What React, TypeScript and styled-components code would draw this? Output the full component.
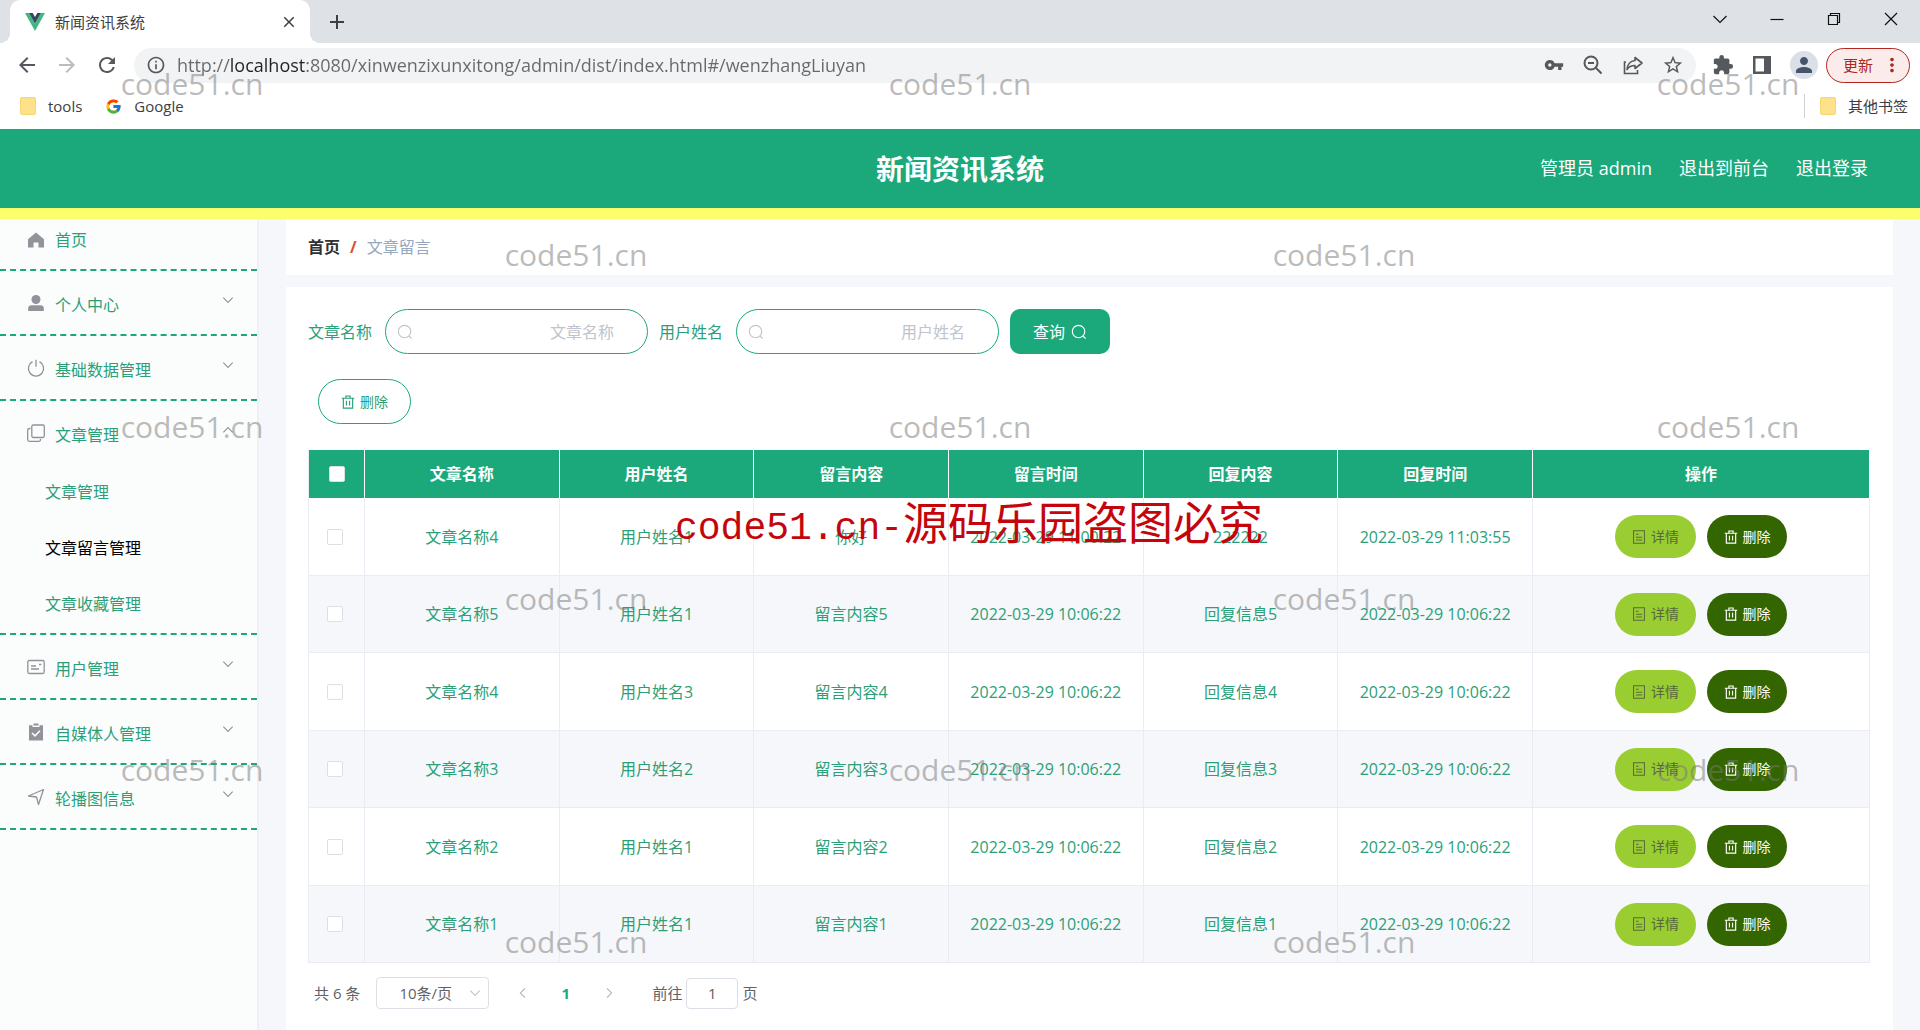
import React from "react";
import styled, { createGlobalStyle, css } from "styled-components";
import {
  MdAdd,
  MdArrowBack,
  MdArrowForward,
  MdClose,
  MdExtension,
  MdInfoOutline,
  MdMoreVert,
  MdPerson,
  MdRefresh,
  MdStarBorder,
  MdVpnKey,
} from "react-icons/md";
import { FcGoogle } from "react-icons/fc";

const green = "#1ba97b";
const textGreen = "#2c9f78";
const pageGrey = "#f5f7fa";
const line = "#e9ecf2";

const GlobalStyle = createGlobalStyle`
  *, *::before, *::after { box-sizing: border-box; }
  body {
    margin: 0;
    background: #fff;
    font-family: "Open Sans", "Noto Sans CJK SC", sans-serif;
    font-size: 16px;
    line-height: 24px;
    color: ${textGreen};
  }
  button, input, select { font: inherit; color: inherit; margin: 0; }
  button { padding: 0; border: 0; background: none; cursor: pointer; }
  a { color: inherit; text-decoration: none; }
  svg { display: block; flex: none; }
`;

const Screen = styled.div`
  position: relative;
  display: flex;
  flex-direction: column;
  min-height: 100vh;
  overflow: hidden;
`;

/* ---------- browser frame ---------- */

const TabStrip = styled.div`
  display: flex;
  align-items: center;
  height: 43px;
  padding-left: 10px;
  background: #dee1e6;
  color: #3c4043;
`;

const Tab = styled.div`
  position: relative;
  display: flex;
  align-items: center;
  gap: 10px;
  width: 300px;
  height: 43px;
  padding: 0 12px 0 15px;
  border-radius: 10px 10px 0 0;
  background: #fff;
  font-size: 15px;

  &::before,
  &::after {
    content: "";
    position: absolute;
    bottom: 0;
    width: 10px;
    height: 10px;
  }
  &::before {
    left: -10px;
    background: radial-gradient(circle at 0 0, transparent 10px, #fff 10px);
  }
  &::after {
    right: -10px;
    background: radial-gradient(circle at 100% 0, transparent 10px, #fff 10px);
  }
`;

const TabTitle = styled.span`
  flex: 1;
`;

const NewTab = styled.button`
  margin-left: 15px;
`;

const WindowControls = styled.div`
  display: flex;
  gap: 37px;
  margin-left: auto;
  padding: 0 19px 6px 0;
  color: #111;
`;

const Toolbar = styled.div`
  display: flex;
  align-items: center;
  height: 46px;
  padding: 0 10px 2px 15px;
  color: #55595e;
`;

const NavButtons = styled.div`
  display: flex;
  gap: 16px;
  margin-right: 15px;
`;

const IconButton = styled.button<{ $dim?: boolean }>`
  color: ${(p) => (p.$dim ? "#babcbe" : "inherit")};
`;

const AddressBar = styled.div`
  display: flex;
  flex: 1;
  align-items: center;
  gap: 11px;
  height: 35px;
  padding: 0 12px;
  border-radius: 18px;
  background: #f1f3f4;
`;

const AddressInput = styled.input`
  flex: 1;
  min-width: 0;
  height: 30px;
  padding: 0;
  border: 0;
  outline: 0;
  font-size: 18px;
  color: transparent;
  background: linear-gradient(to right, #65696e 53px, #202124 53px, #202124 129px, #65696e 129px);
  background-clip: text;
  -webkit-background-clip: text;
`;

const AddressActions = styled.div`
  display: flex;
  gap: 18px;
`;

const BrowserActions = styled.div`
  display: flex;
  align-items: center;
  gap: 19px;
  padding: 0 8px 0 16px;
`;

const Avatar = styled.button`
  display: grid;
  place-items: center;
  width: 28px;
  height: 28px;
  border-radius: 50%;
  background: #dadfe8;
  color: #46546a;
`;

const UpdateButton = styled.button`
  display: flex;
  align-items: center;
  justify-content: space-between;
  width: 84px;
  height: 35px;
  padding: 0 6px 0 16px;
  border: 1px solid #b3261e;
  border-radius: 18px;
  background: #fbeceb;
  font-size: 15px;
  color: #a82a22;
`;

const Bookmarks = styled.div`
  display: flex;
  align-items: center;
  height: 40px;
  padding: 0 12px 6px 20px;
  font-size: 15px;
  color: #3c4043;
`;

const Bookmark = styled.a<{ $last?: boolean }>`
  display: flex;
  align-items: center;
  gap: 12px;
  margin-right: 23px;
  ${(p) =>
    p.$last &&
    css`
      margin: 0 0 0 auto;
      padding-left: 15px;
      border-left: 1px solid #cfd2d6;
    `}
`;

const Folder = styled.i`
  width: 16px;
  height: 18px;
  border: 1px solid #f3d774;
  border-radius: 2px;
  background: #fde28b;
`;

/* ---------- application ---------- */

const AppHeader = styled.header`
  display: grid;
  grid-template-columns: 1fr auto 1fr;
  align-items: center;
  height: 90px;
  padding: 0 52px;
  border-bottom: 11px solid #fbff6b;
  background: ${green};
  color: #fff;
`;

const Title = styled.h1`
  grid-column: 2;
  margin: 0;
  font-size: 28px;
  line-height: 40px;
  font-weight: 700;
`;

const HeaderLinks = styled.div`
  display: flex;
  justify-content: flex-end;
  gap: 27px;
  padding-bottom: 2px;
  font-size: 18px;
`;

const Body = styled.div`
  display: flex;
  flex: 1;
`;

const Sidebar = styled.nav`
  flex: none;
  width: 259px;
  border-right: 2px solid #eef0f4;
  background: #fbfcfc;
`;

const MenuItem = styled.button<{ $first?: boolean; $open?: boolean }>`
  display: flex;
  align-items: center;
  gap: 10px;
  width: 100%;
  height: ${(p) => (p.$first ? 52 : p.$open ? 63 : 65)}px;
  padding: 0 23px 0 27px;
  padding-bottom: ${(p) => (p.$first ? 8 : 0)}px;
  border-bottom: ${(p) => (p.$open ? "0" : `2px dashed ${green}`)};
  text-align: left;

  & > svg {
    color: #909399;
  }
`;

const MenuLabel = styled.span<{ $low?: boolean }>`
  flex: 1;
  padding-top: ${(p) => (p.$low ? 4 : 0)}px;
`;

const Arrow = styled.span<{ $up?: boolean }>`
  padding-bottom: 6px;
  color: #909399;
  ${(p) =>
    p.$up &&
    css`
      padding: 6px 0 0;
      transform: rotate(180deg);
    `}
`;

const SubMenu = styled.div`
  padding-bottom: 1px;
  border-bottom: 2px dashed ${green};
`;

const SubItem = styled.button<{ $active?: boolean }>`
  display: block;
  width: 100%;
  height: 56px;
  padding-left: 45px;
  text-align: left;
  color: ${(p) => (p.$active ? "#000" : textGreen)};
`;

const Main = styled.main`
  display: flex;
  flex: 1;
  flex-direction: column;
  gap: 12px;
  min-width: 0;
  padding: 0 27px;
  background: ${pageGrey};
`;

const Crumbs = styled.div`
  display: flex;
  align-items: center;
  gap: 10px;
  height: 56px;
  padding: 0 22px;
  background: #fff;
  color: #97a8be;
`;

const CrumbHome = styled.a`
  font-weight: 700;
  color: #303133;
`;

const CrumbSlash = styled.span`
  font-weight: 700;
  color: #d9502e;
`;

const Card = styled.section`
  flex: 1;
  padding: 22px 23px 20px 22px;
  background: #fff;
`;

const SearchForm = styled.form`
  display: flex;
  align-items: center;
  gap: 11px;
`;

const Field = styled.label`
  display: flex;
  align-items: center;
  gap: 13px;
`;

const InputShell = styled.span`
  display: flex;
  align-items: center;
  width: 263px;
  height: 45px;
  padding: 0 33px 0 11px;
  border: 1px solid ${green};
  border-radius: 23px;
  color: #c0c4cc;
`;

const SearchInput = styled.input`
  flex: 1;
  min-width: 0;
  padding: 0;
  border: 0;
  outline: 0;
  background: transparent;
  text-align: right;
  color: ${textGreen};
  &::placeholder {
    color: #c0c4cc;
    opacity: 1;
  }
`;

const QueryButton = styled.button`
  display: flex;
  align-items: center;
  justify-content: center;
  gap: 6px;
  width: 100px;
  height: 45px;
  border-radius: 10px;
  background: ${green};
  color: #fff;
`;

const kinds = {
  outline: css`
    width: 93px;
    height: 45px;
    border: 1px solid ${green};
    color: ${textGreen};
  `,
  detail: css`
    width: 81px;
    height: 43px;
    background: #9acd32;
    color: #56693c;
  `,
  remove: css`
    width: 80px;
    height: 43px;
    background: #336600;
    color: #fff;
  `,
};

const PillButton = styled.button<{ $kind: keyof typeof kinds }>`
  display: flex;
  align-items: center;
  justify-content: center;
  gap: 5px;
  border-radius: 23px;
  font-size: 14px;
  ${(p) => kinds[p.$kind]}
`;

const BatchBar = styled.div`
  padding: 25px 10px 26px;
`;

const Table = styled.table`
  width: 100%;
  table-layout: fixed;
  border-collapse: separate;
  border-spacing: 0;
  border-left: 1px solid ${line};
  text-align: center;
`;

const CheckCol = styled.col`
  width: 56px;
`;

const ActionCol = styled.col`
  width: 337px;
`;

const HeadCell = styled.th`
  height: 48px;
  padding: 0;
  border-right: 1px solid #fff;
  background: ${green};
  color: #fff;
  font-weight: 700;
`;

const Row = styled.tr`
  height: 78px;
  &:nth-child(even) {
    height: 77px;
    background: ${pageGrey};
  }
`;

const Cell = styled.td`
  padding: 0;
  border-right: 1px solid ${line};
  border-bottom: 1px solid ${line};
  &:first-child {
    padding-right: 4px;
  }
`;

const CheckBox = styled.input`
  display: block;
  width: 16px;
  height: 16px;
  margin: 0 auto;
  appearance: none;
  border: 1px solid #dcdfe6;
  border-radius: 2px;
  background: #fff;
`;

const Actions = styled.div`
  display: flex;
  justify-content: center;
  gap: 11px;
`;

const Pager = styled.div`
  display: flex;
  align-items: center;
  padding: 14px 6px 0;
  font-size: 15px;
  color: #606266;
`;

const SizePicker = styled.span`
  display: grid;
  align-items: center;
  margin: 0 12px 0 16px;
  & > * {
    grid-area: 1 / 1;
  }
  & > svg {
    justify-self: end;
    margin-right: 8px;
    color: #c0c4cc;
    pointer-events: none;
  }
`;

const SizeSelect = styled.select`
  width: 113px;
  height: 32px;
  padding: 0 0 0 22px;
  appearance: none;
  border: 1px solid #dcdfe6;
  border-radius: 4px;
  background: #fff;
`;

const PageButton = styled.button<{ $current?: boolean }>`
  display: grid;
  place-items: center;
  width: 43px;
  height: 32px;
  font-weight: ${(p) => (p.$current ? 700 : 400)};
  color: ${(p) => (p.$current ? green : "#b4b8c0")};
`;

const Jump = styled.label`
  display: flex;
  align-items: center;
  gap: 4px;
  margin-left: 22px;
`;

const JumpInput = styled.input`
  width: 52px;
  height: 31px;
  padding: 0;
  border: 1px solid #dcdfe6;
  border-radius: 4px;
  text-align: center;
`;

/* ---------- watermark layer ---------- */

const MarkGrid = styled.div`
  position: absolute;
  inset: 0;
  display: grid;
  grid-template-columns: repeat(5, 1fr);
  grid-template-rows: repeat(6, 1fr);
  place-items: center;
  pointer-events: none;
  font-size: 30px;
  line-height: 40px;
  color: rgba(120, 120, 120, 0.5);
`;

const Mark = styled.span`
  padding-bottom: 4px;
`;

const Notice = styled.div`
  position: absolute;
  left: 0;
  right: 0;
  top: 499px;
  padding-left: 18px;
  display: flex;
  align-items: center;
  justify-content: center;
  pointer-events: none;
  font-family: "Liberation Mono", "Noto Sans CJK SC", monospace;
  font-size: 38px;
  line-height: 60px;
  color: #c4060c;
`;

const NoticeHan = styled.span`
  font-size: 45px;
`;

/* ---------- icons ---------- */

type IconProps = { size?: number; children: React.ReactNode; sw?: number };
const Line = ({ size = 18, sw = 1.3, children }: IconProps) => (
  <svg width={size} height={size} viewBox="0 0 18 18" fill="none" stroke="currentColor" strokeWidth={sw} aria-hidden="true">
    {children}
  </svg>
);

const SearchIcon = () => (
  <Line size={16}>
    <circle cx="8.5" cy="8.5" r="7" />
    <path d="M13.5 13.5 16.5 16.5" />
  </Line>
);
const TrashIcon = () => (
  <Line size={14} sw={1.5}>
    <path d="M1 4.2h16M3 4.2v12.6h12V4.2M6.3 4V1.3h5.4V4M7 7.5v6M11 7.5v6" />
  </Line>
);
const DetailIcon = () => (
  <Line size={14} sw={1.3}>
    <path d="M2 1h14v16H2zM5 5.5h3.5M5 9.3h8M5 13h8" />
  </Line>
);
const Chevron = ({ size = 12, d = "M2 5.5 9 12.5 16 5.5" }: { size?: number; d?: string }) => (
  <Line size={size} sw={1.7}>
    <path d={d} />
  </Line>
);

const menuIcons: Record<string, React.ReactNode> = {
  home: (
    <Line>
      <path d="M9 1.5 17 8.2V16.5H11.5V11.5H6.5V16.5H1V8.2Z" fill="currentColor" stroke="none" />
    </Line>
  ),
  user: (
    <Line>
      <circle cx="9" cy="5.5" r="4.5" fill="currentColor" stroke="none" />
      <path d="M1.2 17v-2.500a3.300 3.300 0 0 1 3.300-3.300h9a3.300 3.300 0 0 1 3.300 3.300V17Z" fill="currentColor" stroke="none" />
    </Line>
  ),
  power: (
    <Line>
      <path d="M9 .8v7M5.5 2.7a7.6 7.6 0 1 0 7 0" />
    </Line>
  ),
  copy: (
    <Line>
      <rect x="4.8" y="1" width="12.5" height="12.5" rx="1.5" />
      <path d="M3.5 4.5H2.2A1.5 1.5 0 0 0 .7 6v9.8a1.5 1.5 0 0 0 1.5 1.5H12a1.5 1.5 0 0 0 1.5-1.5v-.7" />
    </Line>
  ),
  card: (
    <Line>
      <rect x=".8" y="2.5" width="16.4" height="13" rx="1.5" />
      <path d="M4 8h5M4 11h8M12 6.5h2.300" />
    </Line>
  ),
  claim: (
    <Line>
      <path d="M2 2.200h3.500V4h7V2.200H16V17.500H2Z" fill="currentColor" stroke="none" />
      <path d="M6.5 1.5h5" strokeWidth="2" />
      <path d="m5 10 3 2.800 5-5" stroke="#fff" strokeWidth="1.6" />
    </Line>
  ),
  plane: (
    <Line>
      <path d="M1.5 8 16.5 1.5 11.5 16.5 9.5 9Z" strokeLinejoin="round" />
    </Line>
  ),
};

const VueLogo = () => (
  <svg width="20" height="18" viewBox="0 0 20 18" aria-hidden="true">
    <path d="M0 0h4l6 10.500L16 0h4L10 18Z" fill="#41b883" />
    <path d="M4 0h3.700L10 4l2.300-4H16l-6 10.500Z" fill="#35495e" />
  </svg>
);
const ZoomOutIcon = () => (
  <svg width="22" height="22" viewBox="0 0 22 22" fill="none" stroke="currentColor" strokeWidth="2" aria-hidden="true">
    <circle cx="9" cy="9" r="6.5" />
    <path d="M6 9h6M13.8 13.8 19.5 19.5" />
  </svg>
);
const ShareIcon = () => (
  <svg width="22" height="22" viewBox="0 0 22 22" fill="none" stroke="currentColor" strokeWidth="1.6" aria-hidden="true">
    <path d="M4 8H2.500v11.500h13V16" />
    <path d="M13 3.500 20 9l-7 5.500V11.500c-4 0-6 1-8 4 .3-4.500 3-8.500 8-9Z" strokeLinejoin="round" />
  </svg>
);
const PanelIcon = () => (
  <svg width="18" height="18" viewBox="0 0 18 18" aria-hidden="true">
    <path d="M0 0h18v18H0ZM2.500 2.500v13h8.500v-13Z" fill="currentColor" fillRule="evenodd" />
  </svg>
);
const WinIcon = ({ d }: { d: string }) => (
  <svg width="20" height="14" viewBox="0 0 20 14" fill="none" stroke="currentColor" strokeWidth="1.2" aria-hidden="true">
    <path d={d} />
  </svg>
);

/* ---------- data ---------- */

const menu = [
  { icon: "home", label: "首页" },
  { icon: "user", label: "个人中心" },
  { icon: "power", label: "基础数据管理" },
  { icon: "copy", label: "文章管理", children: ["文章管理", "文章留言管理", "文章收藏管理"] },
  { icon: "card", label: "用户管理" },
  { icon: "claim", label: "自媒体人管理" },
  { icon: "plane", label: "轮播图信息" },
];

const columns = ["文章名称", "用户姓名", "留言内容", "留言时间", "回复内容", "回复时间"];
const stamp = "2022-03-29 10:06:22";
const rows = [
  ["文章名称4", "用户姓名1", "你好", "2022-03-29 11:00:22", "222222", "2022-03-29 11:03:55"],
  ["文章名称5", "用户姓名1", "留言内容5", stamp, "回复信息5", stamp],
  ["文章名称4", "用户姓名3", "留言内容4", stamp, "回复信息4", stamp],
  ["文章名称3", "用户姓名2", "留言内容3", stamp, "回复信息3", stamp],
  ["文章名称2", "用户姓名1", "留言内容2", stamp, "回复信息2", stamp],
  ["文章名称1", "用户姓名1", "留言内容1", stamp, "回复信息1", stamp],
];

const windowIcons = [
  { name: "搜索标签页", d: "M3.5 4 10 10.5 16.5 4" },
  { name: "最小化", d: "M3.5 7.5h13" },
  { name: "还原", d: "M4.5 3.5h9v9h-9ZM6.500 3.500V1.500H15.500v9h-2" },
  { name: "关闭", d: "M4 1 16 13M16 1 4 13" },
];

function Browser() {
  return (
    <>
      <TabStrip>
        <Tab>
          <VueLogo />
          <TabTitle>新闻资讯系统</TabTitle>
          <IconButton aria-label="关闭标签页"><MdClose size={18} /></IconButton>
        </Tab>
        <NewTab aria-label="新标签页"><MdAdd size={24} /></NewTab>
        <WindowControls>
          {windowIcons.map((w) => (
            <IconButton key={w.name} aria-label={w.name}><WinIcon d={w.d} /></IconButton>
          ))}
        </WindowControls>
      </TabStrip>
      <Toolbar>
        <NavButtons>
          <IconButton aria-label="后退"><MdArrowBack size={24} /></IconButton>
          <IconButton aria-label="前进" $dim><MdArrowForward size={24} /></IconButton>
          <IconButton aria-label="刷新"><MdRefresh size={24} /></IconButton>
        </NavButtons>
        <AddressBar>
          <MdInfoOutline size={20} />
          <AddressInput
            aria-label="地址"
            defaultValue="http://localhost:8080/xinwenzixunxitong/admin/dist/index.html#/wenzhangLiuyan"
          />
          <AddressActions>
            <IconButton aria-label="密码"><MdVpnKey size={20} /></IconButton>
            <IconButton aria-label="缩放"><ZoomOutIcon /></IconButton>
            <IconButton aria-label="分享"><ShareIcon /></IconButton>
            <IconButton aria-label="收藏"><MdStarBorder size={22} /></IconButton>
          </AddressActions>
        </AddressBar>
        <BrowserActions>
          <IconButton aria-label="扩展程序"><MdExtension size={22} /></IconButton>
          <IconButton aria-label="侧边栏"><PanelIcon /></IconButton>
          <Avatar aria-label="用户"><MdPerson size={24} /></Avatar>
        </BrowserActions>
        <UpdateButton>更新<MdMoreVert size={22} /></UpdateButton>
      </Toolbar>
      <Bookmarks>
        <Bookmark href="#tools"><Folder />tools</Bookmark>
        <Bookmark href="#google"><FcGoogle size={17} />Google</Bookmark>
        <Bookmark href="#other" $last><Folder />其他书签</Bookmark>
      </Bookmarks>
    </>
  );
}

function SideMenu() {
  return (
    <Sidebar>
      {menu.map((m, i) => (
        <React.Fragment key={m.label}>
          <MenuItem $first={i === 0} $open={!!m.children}>
            {menuIcons[m.icon]}
            <MenuLabel $low={i > 0}>{m.label}</MenuLabel>
            {i > 0 && <Arrow $up={!!m.children}><Chevron /></Arrow>}
          </MenuItem>
          {m.children && (
            <SubMenu>
              {m.children.map((c) => (
                <SubItem key={c} $active={c === "文章留言管理"}>{c}</SubItem>
              ))}
            </SubMenu>
          )}
        </React.Fragment>
      ))}
    </Sidebar>
  );
}

function MessageTable() {
  return (
    <Table>
      <colgroup>
        <CheckCol />
        {columns.map((c) => <col key={c} />)}
        <ActionCol />
      </colgroup>
      <thead>
        <tr>
          <HeadCell><CheckBox type="checkbox" aria-label="全选" /></HeadCell>
          {columns.map((c) => <HeadCell key={c}>{c}</HeadCell>)}
          <HeadCell>操作</HeadCell>
        </tr>
      </thead>
      <tbody>
        {rows.map((r, i) => (
          <Row key={i}>
            <Cell><CheckBox type="checkbox" aria-label={`选择 ${r[0]}`} /></Cell>
            {r.map((v, j) => <Cell key={j}>{v}</Cell>)}
            <Cell>
              <Actions>
                <PillButton $kind="detail"><DetailIcon />详情</PillButton>
                <PillButton $kind="remove"><TrashIcon />删除</PillButton>
              </Actions>
            </Cell>
          </Row>
        ))}
      </tbody>
    </Table>
  );
}

export default function App() {
  return (
    <Screen>
      <GlobalStyle />
      <Browser />
      <AppHeader>
        <Title>新闻资讯系统</Title>
        <HeaderLinks>
          <span>管理员 admin</span>
          <a href="#front">退出到前台</a>
          <a href="#logout">退出登录</a>
        </HeaderLinks>
      </AppHeader>
      <Body>
        <SideMenu />
        <Main>
          <Crumbs>
            <CrumbHome href="#home">首页</CrumbHome>
            <CrumbSlash>/</CrumbSlash>
            <span>文章留言</span>
          </Crumbs>
          <Card>
            <SearchForm onSubmit={(e) => e.preventDefault()}>
              {["文章名称", "用户姓名"].map((f) => (
                <Field key={f}>
                  {f}
                  <InputShell>
                    <SearchIcon />
                    <SearchInput type="text" placeholder={f} />
                  </InputShell>
                </Field>
              ))}
              <QueryButton type="submit">查询<SearchIcon /></QueryButton>
            </SearchForm>
            <BatchBar>
              <PillButton $kind="outline"><TrashIcon />删除</PillButton>
            </BatchBar>
            <MessageTable />
            <Pager>
              <span>共 6 条</span>
              <SizePicker>
                <SizeSelect aria-label="每页条数"><option>10条/页</option></SizeSelect>
                <Chevron />
              </SizePicker>
              <PageButton aria-label="上一页"><Chevron d="M12 2 5 9l7 7" /></PageButton>
              <PageButton $current>1</PageButton>
              <PageButton aria-label="下一页"><Chevron d="M6 2l7 7-7 7" /></PageButton>
              <Jump>前往<JumpInput type="text" defaultValue="1" />页</Jump>
            </Pager>
          </Card>
        </Main>
      </Body>
      <MarkGrid aria-hidden="true">
        {Array.from({ length: 30 }, (_, i) => {
          const shown = (Math.floor(i / 5) + (i % 5)) % 2 === 0;
          return <Mark key={i}>{shown ? "code51.cn" : ""}</Mark>;
        })}
      </MarkGrid>
      <Notice aria-hidden="true">
        code51.cn-<NoticeHan>源码乐园盗图必究</NoticeHan>
      </Notice>
    </Screen>
  );
}
